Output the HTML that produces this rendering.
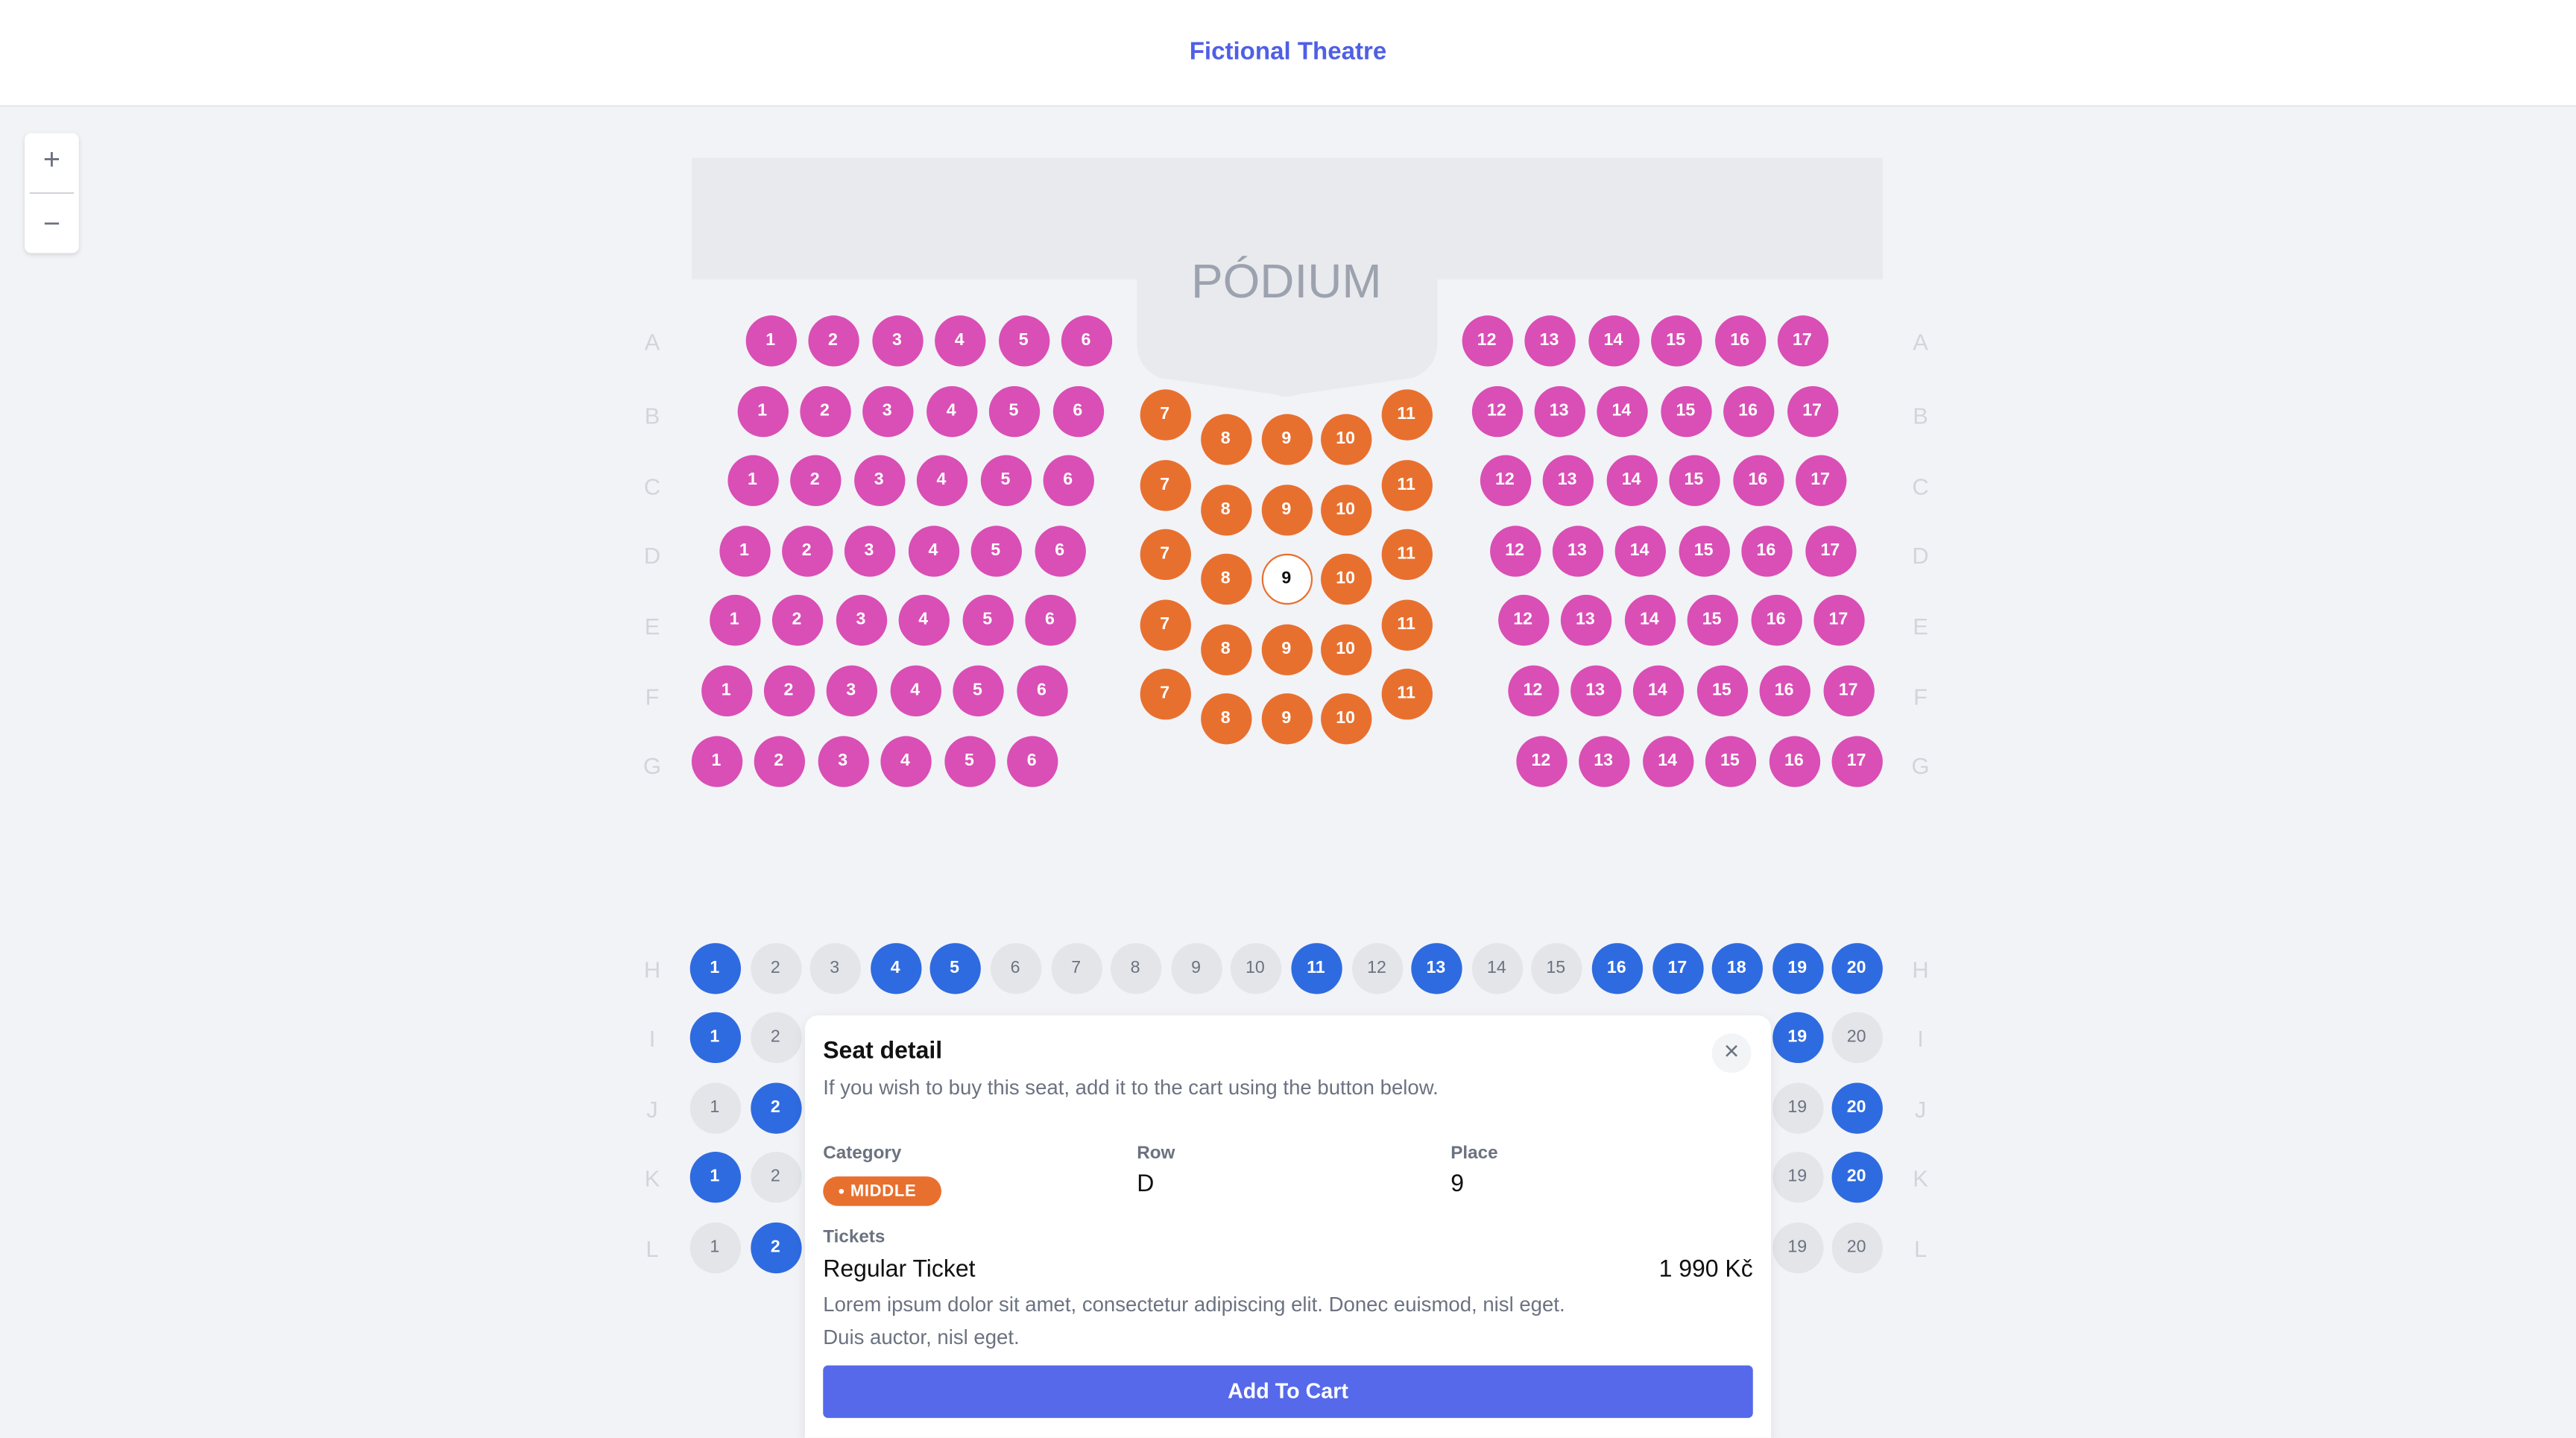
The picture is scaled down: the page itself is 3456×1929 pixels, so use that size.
<!DOCTYPE html>
<html><head><meta charset="utf-8"><style>
*{margin:0;padding:0;box-sizing:border-box}
html,body{width:3456px;height:1928px;overflow:hidden;background:#f2f3f7;font-family:"Liberation Sans",sans-serif}
#w{position:absolute;left:0;top:0;width:1568px;height:875px;transform:scale(2.20408);transform-origin:0 0;overflow:hidden}
.hd{position:absolute;left:0;top:0;width:1568px;height:65px;background:#fff;border-bottom:1px solid #e5e7eb;text-align:center;line-height:64px;color:#4f5fe6;font-weight:bold;font-size:15px}
.s{position:absolute;width:31px;height:31px;margin:-15.5px 0 0 -15.5px;border-radius:50%;color:#fff;font-weight:bold;font-size:10.5px;text-align:center;line-height:31px}
.p{background:#d94fb5}.o{background:#e8702f}.b{background:#2f6be0}.g{background:#e3e5e9;color:#6b7280;font-weight:normal}
.l{position:absolute;width:20px;margin:-9px 0 0 -10px;text-align:center;color:#d1d5db;font-size:14px;line-height:18px}
.zc{position:absolute;left:15px;top:81px;width:33px;height:73px;background:#fff;border-radius:4px;box-shadow:0 1px 3px rgba(0,0,0,.12);color:#6b7280;text-align:center}
.m{position:absolute;left:490px;top:618px;width:588px;height:270px;background:#fff;border-radius:8px;box-shadow:0 2px 8px rgba(0,0,0,.08);color:#111}
.m div{position:absolute}
.lb{font-size:11px;font-weight:bold;color:#6b7280}
</style></head><body><div id="w">
<div class="hd">Fictional Theatre</div>
<div class="zc"><div style="position:absolute;top:6px;width:33px;font-size:18px;line-height:20px">+</div><div style="position:absolute;left:3px;top:36px;width:27px;height:1px;background:#d1d5db"></div><div style="position:absolute;top:45px;width:33px;font-size:18px;line-height:20px">−</div></div>
<svg style="position:absolute;left:0;top:0" width="1568" height="300"><path d="M421 96H1146V170H875V208Q875 224 860 230L790 240Q783 243 776 240L706 230Q692 224 692 208V170H421Z" fill="#e9eaee"/><text x="783" y="181" text-anchor="middle" font-family="Liberation Sans,sans-serif" font-size="29" fill="#9ca3af">PÓDIUM</text></svg>

<div class="l" style="left:397px;top:208px">A</div><div class="l" style="left:397px;top:253px">B</div><div class="l" style="left:397px;top:296px">C</div><div class="l" style="left:397px;top:338px">D</div><div class="l" style="left:397px;top:381px">E</div><div class="l" style="left:397px;top:424px">F</div><div class="l" style="left:397px;top:466px">G</div><div class="l" style="left:397px;top:590px">H</div><div class="l" style="left:397px;top:632px">I</div><div class="l" style="left:397px;top:675px">J</div><div class="l" style="left:397px;top:717px">K</div><div class="l" style="left:397px;top:760px">L</div>
<div class="l" style="left:1169px;top:208px">A</div><div class="l" style="left:1169px;top:253px">B</div><div class="l" style="left:1169px;top:296px">C</div><div class="l" style="left:1169px;top:338px">D</div><div class="l" style="left:1169px;top:381px">E</div><div class="l" style="left:1169px;top:424px">F</div><div class="l" style="left:1169px;top:466px">G</div><div class="l" style="left:1169px;top:590px">H</div><div class="l" style="left:1169px;top:632px">I</div><div class="l" style="left:1169px;top:675px">J</div><div class="l" style="left:1169px;top:717px">K</div><div class="l" style="left:1169px;top:760px">L</div>

<div class="s p" style="left:469px;top:207px">1</div><div class="s p" style="left:507px;top:207px">2</div><div class="s p" style="left:546px;top:207px">3</div><div class="s p" style="left:584px;top:207px">4</div><div class="s p" style="left:623px;top:207px">5</div><div class="s p" style="left:661px;top:207px">6</div>
<div class="s p" style="left:464px;top:250px">1</div><div class="s p" style="left:502px;top:250px">2</div><div class="s p" style="left:540px;top:250px">3</div><div class="s p" style="left:579px;top:250px">4</div><div class="s p" style="left:617px;top:250px">5</div><div class="s p" style="left:656px;top:250px">6</div>
<div class="s p" style="left:458px;top:292px">1</div><div class="s p" style="left:496px;top:292px">2</div><div class="s p" style="left:535px;top:292px">3</div><div class="s p" style="left:573px;top:292px">4</div><div class="s p" style="left:612px;top:292px">5</div><div class="s p" style="left:650px;top:292px">6</div>
<div class="s p" style="left:453px;top:335px">1</div><div class="s p" style="left:491px;top:335px">2</div><div class="s p" style="left:529px;top:335px">3</div><div class="s p" style="left:568px;top:335px">4</div><div class="s p" style="left:606px;top:335px">5</div><div class="s p" style="left:645px;top:335px">6</div>
<div class="s p" style="left:447px;top:377px">1</div><div class="s p" style="left:485px;top:377px">2</div><div class="s p" style="left:524px;top:377px">3</div><div class="s p" style="left:562px;top:377px">4</div><div class="s p" style="left:601px;top:377px">5</div><div class="s p" style="left:639px;top:377px">6</div>
<div class="s p" style="left:442px;top:420px">1</div><div class="s p" style="left:480px;top:420px">2</div><div class="s p" style="left:518px;top:420px">3</div><div class="s p" style="left:557px;top:420px">4</div><div class="s p" style="left:595px;top:420px">5</div><div class="s p" style="left:634px;top:420px">6</div>
<div class="s p" style="left:436px;top:463px">1</div><div class="s p" style="left:474px;top:463px">2</div><div class="s p" style="left:513px;top:463px">3</div><div class="s p" style="left:551px;top:463px">4</div><div class="s p" style="left:590px;top:463px">5</div><div class="s p" style="left:628px;top:463px">6</div>

<div class="s p" style="left:905px;top:207px">12</div><div class="s p" style="left:943px;top:207px">13</div><div class="s p" style="left:982px;top:207px">14</div><div class="s p" style="left:1020px;top:207px">15</div><div class="s p" style="left:1059px;top:207px">16</div><div class="s p" style="left:1097px;top:207px">17</div>
<div class="s p" style="left:911px;top:250px">12</div><div class="s p" style="left:949px;top:250px">13</div><div class="s p" style="left:987px;top:250px">14</div><div class="s p" style="left:1026px;top:250px">15</div><div class="s p" style="left:1064px;top:250px">16</div><div class="s p" style="left:1103px;top:250px">17</div>
<div class="s p" style="left:916px;top:292px">12</div><div class="s p" style="left:954px;top:292px">13</div><div class="s p" style="left:993px;top:292px">14</div><div class="s p" style="left:1031px;top:292px">15</div><div class="s p" style="left:1070px;top:292px">16</div><div class="s p" style="left:1108px;top:292px">17</div>
<div class="s p" style="left:922px;top:335px">12</div><div class="s p" style="left:960px;top:335px">13</div><div class="s p" style="left:998px;top:335px">14</div><div class="s p" style="left:1037px;top:335px">15</div><div class="s p" style="left:1075px;top:335px">16</div><div class="s p" style="left:1114px;top:335px">17</div>
<div class="s p" style="left:927px;top:377px">12</div><div class="s p" style="left:965px;top:377px">13</div><div class="s p" style="left:1004px;top:377px">14</div><div class="s p" style="left:1042px;top:377px">15</div><div class="s p" style="left:1081px;top:377px">16</div><div class="s p" style="left:1119px;top:377px">17</div>
<div class="s p" style="left:933px;top:420px">12</div><div class="s p" style="left:971px;top:420px">13</div><div class="s p" style="left:1009px;top:420px">14</div><div class="s p" style="left:1048px;top:420px">15</div><div class="s p" style="left:1086px;top:420px">16</div><div class="s p" style="left:1125px;top:420px">17</div>
<div class="s p" style="left:938px;top:463px">12</div><div class="s p" style="left:976px;top:463px">13</div><div class="s p" style="left:1015px;top:463px">14</div><div class="s p" style="left:1053px;top:463px">15</div><div class="s p" style="left:1092px;top:463px">16</div><div class="s p" style="left:1130px;top:463px">17</div>

<div class="s o" style="left:709px;top:252px">7</div><div class="s o" style="left:709px;top:295px">7</div><div class="s o" style="left:709px;top:337px">7</div><div class="s o" style="left:709px;top:380px">7</div><div class="s o" style="left:709px;top:422px">7</div>
<div class="s o" style="left:746px;top:267px">8</div><div class="s o" style="left:746px;top:310px">8</div><div class="s o" style="left:746px;top:352px">8</div><div class="s o" style="left:746px;top:395px">8</div><div class="s o" style="left:746px;top:437px">8</div>
<div class="s o" style="left:783px;top:267px">9</div><div class="s o" style="left:783px;top:310px">9</div><div class="s" style="left:783px;top:352px;background:#fff;border:1.5px solid #e8702f;color:#111;line-height:28px">9</div><div class="s o" style="left:783px;top:395px">9</div><div class="s o" style="left:783px;top:437px">9</div>
<div class="s o" style="left:819px;top:267px">10</div><div class="s o" style="left:819px;top:310px">10</div><div class="s o" style="left:819px;top:352px">10</div><div class="s o" style="left:819px;top:395px">10</div><div class="s o" style="left:819px;top:437px">10</div>
<div class="s o" style="left:856px;top:252px">11</div><div class="s o" style="left:856px;top:295px">11</div><div class="s o" style="left:856px;top:337px">11</div><div class="s o" style="left:856px;top:380px">11</div><div class="s o" style="left:856px;top:422px">11</div>

<div class="s b" style="left:435px;top:589px">1</div><div class="s g" style="left:472px;top:589px">2</div><div class="s g" style="left:508px;top:589px">3</div><div class="s b" style="left:545px;top:589px">4</div><div class="s b" style="left:581px;top:589px">5</div><div class="s g" style="left:618px;top:589px">6</div><div class="s g" style="left:655px;top:589px">7</div><div class="s g" style="left:691px;top:589px">8</div><div class="s g" style="left:728px;top:589px">9</div><div class="s g" style="left:764px;top:589px">10</div><div class="s b" style="left:801px;top:589px">11</div><div class="s g" style="left:838px;top:589px">12</div><div class="s b" style="left:874px;top:589px">13</div><div class="s g" style="left:911px;top:589px">14</div><div class="s g" style="left:947px;top:589px">15</div><div class="s b" style="left:984px;top:589px">16</div><div class="s b" style="left:1021px;top:589px">17</div><div class="s b" style="left:1057px;top:589px">18</div><div class="s b" style="left:1094px;top:589px">19</div><div class="s b" style="left:1130px;top:589px">20</div>
<div class="s b" style="left:435px;top:631px">1</div><div class="s g" style="left:472px;top:631px">2</div><div class="s b" style="left:1094px;top:631px">19</div><div class="s g" style="left:1130px;top:631px">20</div>
<div class="s g" style="left:435px;top:674px">1</div><div class="s b" style="left:472px;top:674px">2</div><div class="s g" style="left:1094px;top:674px">19</div><div class="s b" style="left:1130px;top:674px">20</div>
<div class="s b" style="left:435px;top:716px">1</div><div class="s g" style="left:472px;top:716px">2</div><div class="s g" style="left:1094px;top:716px">19</div><div class="s b" style="left:1130px;top:716px">20</div>
<div class="s g" style="left:435px;top:759px">1</div><div class="s b" style="left:472px;top:759px">2</div><div class="s g" style="left:1094px;top:759px">19</div><div class="s g" style="left:1130px;top:759px">20</div>

<div class="m">
<div style="left:11px;top:14px;font-size:14.5px;font-weight:bold">Seat detail</div>
<div style="left:552px;top:11px;width:24px;height:24px;border-radius:50%;background:#f3f4f6;color:#6b7280;text-align:center;line-height:23px;font-size:16px">×</div>
<div style="left:11px;top:37px;font-size:12.5px;color:#6b7280">If you wish to buy this seat, add it to the cart using the button below.</div>
<div class="lb" style="left:11px;top:78px">Category</div>
<div class="lb" style="left:202px;top:78px">Row</div>
<div class="lb" style="left:393px;top:78px">Place</div>
<div style="left:11px;top:98px;width:72px;height:18px;border-radius:9px;background:#e8702f;color:#fff;font-size:10px;font-weight:bold;line-height:19px;padding-left:9px;letter-spacing:.3px"><span style="font-size:7px;vertical-align:1px">●</span> MIDDLE</div>
<div style="left:202px;top:95px;font-size:14.5px">D</div>
<div style="left:393px;top:95px;font-size:14.5px">9</div>
<div class="lb" style="left:11px;top:129px">Tickets</div>
<div style="left:11px;top:147px;font-size:14.5px">Regular Ticket</div>
<div style="right:11px;top:147px;font-size:14.5px">1 990 Kč</div>
<div style="left:11px;top:167px;font-size:12.5px;color:#6b7280;line-height:19.5px;white-space:nowrap">Lorem ipsum dolor sit amet, consectetur adipiscing elit. Donec euismod, nisl eget.<br>Duis auctor, nisl eget.</div>
<div style="left:11px;top:213px;width:566px;height:32px;background:#5569ea;border-radius:3px;color:#fff;text-align:center;line-height:32px;font-size:13px;font-weight:bold">Add To Cart</div>
</div>
</div></body></html>
